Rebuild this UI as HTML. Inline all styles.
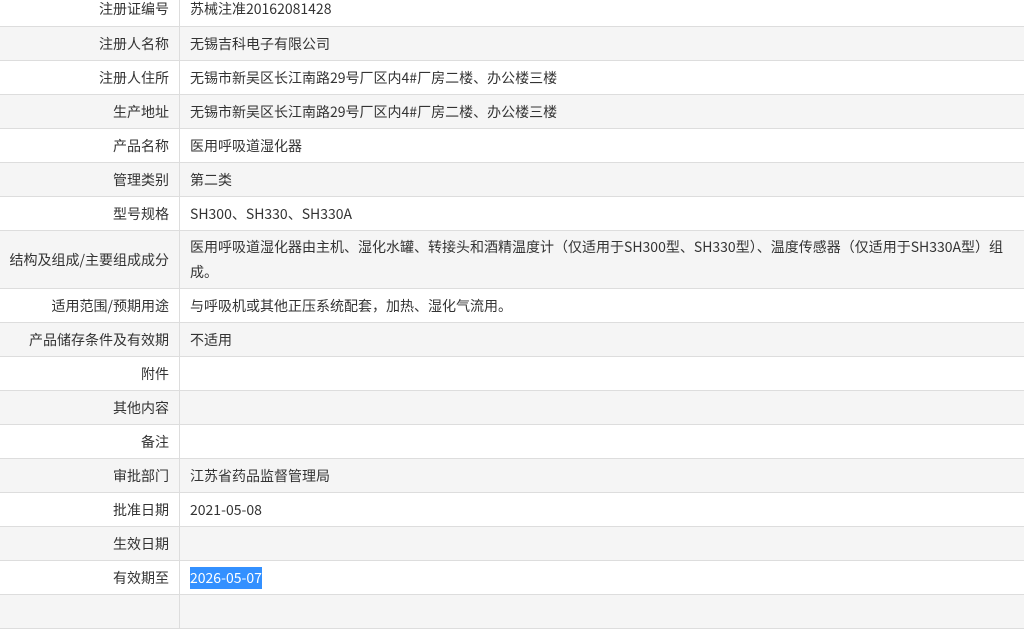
<!DOCTYPE html>
<html><head><meta charset="utf-8"><style>
body{margin:0;background:#fff;font-family:"Noto Sans CJK SC","Liberation Sans",sans-serif;font-size:14px;color:#333;overflow:hidden;width:1024px;height:602px;position:relative}
.r{position:absolute;left:0;width:1024px;border-bottom:1px solid #ddd;display:flex}
.r.g{background:#f5f5f5}
.l{width:169px;flex:none;padding-right:10px;border-right:1px solid #ddd;text-align:right;display:flex;align-items:center;justify-content:flex-end;white-space:nowrap}
.v{padding-left:10px;display:flex;align-items:center;flex:1;padding-right:6px}
.sel{background:#3390ff;color:#fff;line-height:22px}
</style></head><body>
<div class="r" style="top:-8px;height:34px"><div class="l">注册证编号</div><div class="v">苏械注准20162081428</div></div>
<div class="r g" style="top:27px;height:33px"><div class="l">注册人名称</div><div class="v">无锡吉科电子有限公司</div></div>
<div class="r" style="top:61px;height:33px"><div class="l">注册人住所</div><div class="v">无锡市新吴区长江南路29号厂区内4#厂房二楼、办公楼三楼</div></div>
<div class="r g" style="top:95px;height:33px"><div class="l">生产地址</div><div class="v">无锡市新吴区长江南路29号厂区内4#厂房二楼、办公楼三楼</div></div>
<div class="r" style="top:129px;height:33px"><div class="l">产品名称</div><div class="v">医用呼吸道湿化器</div></div>
<div class="r g" style="top:163px;height:33px"><div class="l">管理类别</div><div class="v">第二类</div></div>
<div class="r" style="top:197px;height:33px"><div class="l">型号规格</div><div class="v">SH300、SH330、SH330A</div></div>
<div class="r g" style="top:231px;height:57px"><div class="l">结构及组成/主要组成成分</div><div class="v" style="line-height:25px">医用呼吸道湿化器由主机、湿化水罐、转接头和酒精温度计（仅适用于SH300型、SH330型）、温度传感器（仅适用于SH330A型）组成。</div></div>
<div class="r" style="top:289px;height:33px"><div class="l">适用范围/预期用途</div><div class="v">与呼吸机或其他正压系统配套，加热、湿化气流用。</div></div>
<div class="r g" style="top:323px;height:33px"><div class="l">产品储存条件及有效期</div><div class="v">不适用</div></div>
<div class="r" style="top:357px;height:33px"><div class="l">附件</div><div class="v"></div></div>
<div class="r g" style="top:391px;height:33px"><div class="l">其他内容</div><div class="v"></div></div>
<div class="r" style="top:425px;height:33px"><div class="l">备注</div><div class="v"></div></div>
<div class="r g" style="top:459px;height:33px"><div class="l">审批部门</div><div class="v">江苏省药品监督管理局</div></div>
<div class="r" style="top:493px;height:33px"><div class="l">批准日期</div><div class="v">2021-05-08</div></div>
<div class="r g" style="top:527px;height:33px"><div class="l">生效日期</div><div class="v"></div></div>
<div class="r" style="top:561px;height:33px"><div class="l">有效期至</div><div class="v"><span class="sel">2026-05-07</span></div></div>
<div class="r g" style="top:595px;height:33px"><div class="l"></div><div class="v"></div></div>
</body></html>
